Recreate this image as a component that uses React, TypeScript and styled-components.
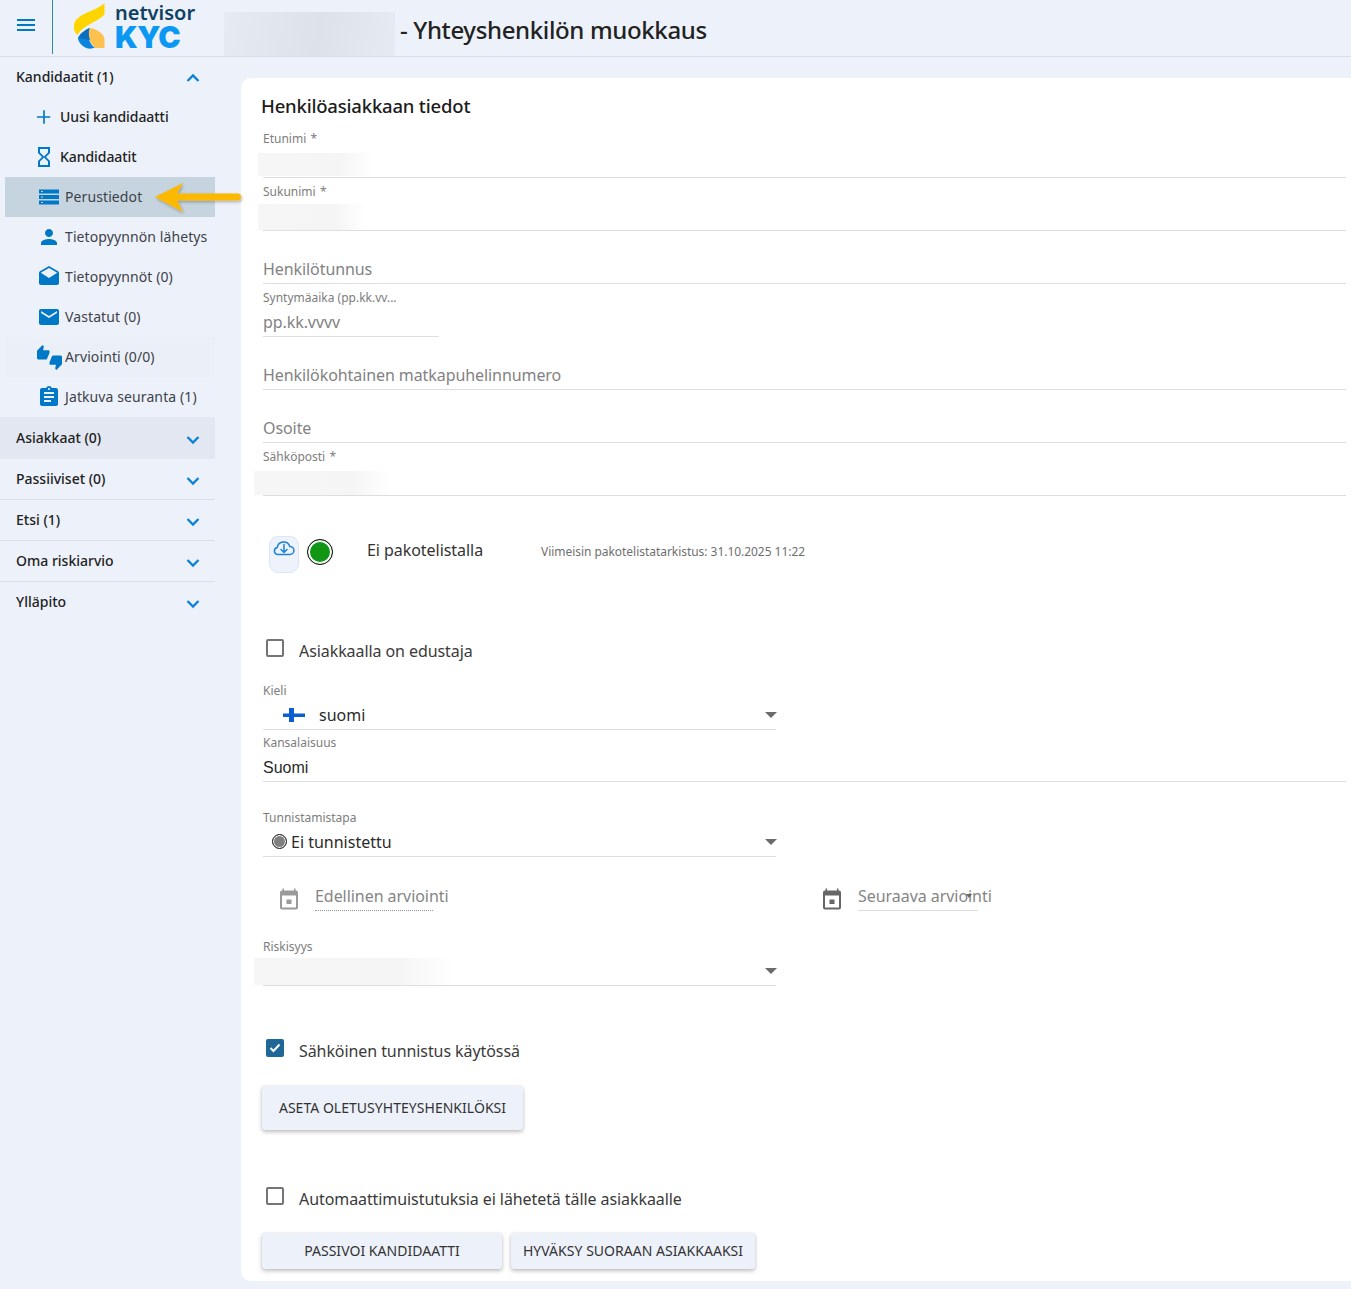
import React from "react";
import styled, { createGlobalStyle } from "styled-components";

const Global = createGlobalStyle`
  html, body { margin: 0; padding: 0; background: #edf1fa; }
  body { font-family: "Noto Sans", "Open Sans", sans-serif; color: #222; overflow: hidden; }
  * { box-sizing: border-box; }
`;

const Page = styled.div`
  width: 1351px;
  height: 1289px;
  display: flex;
  flex-direction: column;
  background: #edf1fa;
  overflow: hidden;
`;

const Header = styled.header`
  height: 57px;
  flex: none;
  display: flex;
  align-items: flex-start;
  border-bottom: 1px solid #d8dde7;
`;
const MenuButton = styled.div`
  width: 53px;
  height: 54px;
  flex: none;
  display: flex;
  align-items: center;
  justify-content: center;
  border-right: 1px solid #2e8ba6;
  padding-bottom: 5px;
  svg { display: block; }
`;
const LogoBox = styled.div`
  width: 171px;
  height: 56px;
  flex: none;
  display: flex;
  padding-left: 21px;
`;
const LogoMark = styled.svg`
  width: 32px;
  height: 56px;
  flex: none;
`;
const LogoText = styled.div`
  margin-left: 9px;
  display: flex;
  flex-direction: column;
`;
const LogoTop = styled.div`
  font-family: "Noto Sans", sans-serif;
  font-weight: 600;
  font-size: 20px;
  line-height: 22px;
  color: #0d4163;
  margin-top: 2px;
`;
const LogoBottom = styled.div`
  font-family: "Inter", sans-serif;
  font-weight: 900;
  font-size: 30px;
  line-height: 26px;
  color: #0a98f2;
  letter-spacing: -0.6px;
`;
const TitleBlur = styled.div`
  width: 171px;
  height: 44px;
  margin-top: 12px;
  flex: none;
  background: linear-gradient(100deg, #e6eaf3 0%, #dde1ea 55%, #e6eaf3 100%);
`;
const PageTitle = styled.h1`
  margin: 0 0 0 5px;
  font-size: 24px;
  font-weight: 500;
  line-height: 60px;
  color: #222;
  letter-spacing: -0.36px;
`;

const Body = styled.div`
  flex: 1;
  display: flex;
  align-items: flex-start;
  min-height: 0;
`;

const Sidebar = styled.nav`
  width: 215px;
  flex: none;
  display: flex;
  flex-direction: column;
`;
const Section = styled.div<{ $shade?: boolean; $line?: boolean; $height: number }>`
  height: ${p => p.$height}px;
  display: flex;
  align-items: center;
  justify-content: space-between;
  padding: 0 14px 0 16px;
  font-size: 14px;
  font-weight: 500;
  color: #222;
  background: ${p => (p.$shade ? "#e3e7f1" : "transparent")};
  border-bottom: ${p => (p.$line ? "1px solid #d9dee8" : "none")};
`;
const SectionLabel = styled.span`
  margin-bottom: 2px;
`;
const ChevronSvg = styled.svg<{ $up?: boolean }>`
  width: 16px;
  height: 10px;
  margin-top: ${p => (p.$up ? 2 : 4)}px;
  fill: none;
  stroke: #0a82d8;
  stroke-width: 2.3;
  flex: none;
`;
const NavItem = styled.div<{ $bg?: string; $strong?: boolean }>`
  height: 40px;
  margin-left: 5px;
  display: flex;
  align-items: center;
  position: relative;
  font-size: 14px;
  font-weight: ${p => (p.$strong ? 500 : 400)};
  color: ${p => (p.$strong ? "#222" : "#3d4249")};
  letter-spacing: ${p => (p.$strong ? "-0.06px" : "0.1px")};
  background: ${p => p.$bg ?? "transparent"};
`;
const NavIconSvg = styled.svg<{ $size: number; $left: number }>`
  width: ${p => p.$size}px;
  height: ${p => p.$size}px;
  margin-left: ${p => p.$left}px;
  fill: #0078c8;
  display: block;
  flex: none;
`;
const NavLabel = styled.span<{ $gap: number }>`
  margin: 0 0 2px ${p => p.$gap}px;
`;
const ArrowOverlay = styled.svg`
  position: absolute;
  left: 146px;
  top: 0;
  width: 94px;
  height: 40px;
  overflow: visible;
`;

const Card = styled.main`
  flex: 1;
  height: 1203px;
  margin: 21px 0 0 26px;
  background: #fff;
  border-radius: 10px 0 0 10px;
  padding: 0 5px 0 22px;
  display: flex;
  flex-direction: column;
  align-items: flex-start;
`;
const CardTitle = styled.h2`
  margin: 0 0 0 -2px;
  height: 47px;
  font-size: 18.5px;
  font-weight: 500;
  line-height: 55px;
  color: #1c1c1c;
  letter-spacing: -0.19px;
`;
const Field = styled.div<{ $width?: number; $height?: number; $top?: number }>`
  position: relative;
  width: ${p => (p.$width ? `${p.$width}px` : "100%")};
  height: ${p => p.$height ?? 53}px;
  margin-top: ${p => p.$top ?? 0}px;
  flex: none;
  border-bottom: 1px solid #dedede;
  display: flex;
  flex-direction: column;
  justify-content: flex-end;
`;
const FieldLabel = styled.label<{ $tight?: boolean }>`
  position: absolute;
  left: 0;
  top: ${p => (p.$tight ? 6 : 7)}px;
  font-size: 12px;
  line-height: 14px;
  color: #7d7d7d;
  white-space: nowrap;
`;
const Placeholder = styled.div`
  height: 29px;
  font-size: 16px;
  line-height: 31px;
  color: #828282;
  letter-spacing: -0.08px;
`;
const Value = styled.div`
  height: 29px;
  font-family: "Noto Sans", sans-serif;
  font-size: 16px;
  color: #2a2a2a;
  display: flex;
  align-items: center;
`;
const PlainValue = styled.div`
  height: 29px;
  padding-top: 2px;
  font-family: "Liberation Sans", Arial, sans-serif;
  font-size: 16px;
  line-height: 27px;
  color: #2a2a2a;
`;
const Blur = styled.div<{ $left: number; $top: number; $w: number; $h: number }>`
  position: absolute;
  left: ${p => p.$left}px;
  top: ${p => p.$top}px;
  width: ${p => p.$w}px;
  height: ${p => p.$h}px;
  background: linear-gradient(90deg, #f6f6f6 0%, #f5f5f5 72%, #ffffff 100%);
`;
const Caret = styled.span`
  position: absolute;
  right: -1px;
  bottom: 11px;
  width: 0;
  height: 0;
  border-left: 6px solid transparent;
  border-right: 6px solid transparent;
  border-top: 6px solid #6b6b6b;
`;
const FlagSvg = styled.svg`
  width: 22px;
  height: 14px;
  margin: 0 14px 0 20px;
  flex: none;
`;
const GreyDot = styled.span`
  width: 15px;
  height: 15px;
  margin: 0 4px 0 9px;
  border-radius: 50%;
  border: 1.5px solid #222;
  background: #808080;
  box-shadow: inset 0 0 0 1px #fff;
  flex: none;
`;

const StatusRow = styled.div`
  display: flex;
  align-items: flex-start;
  margin: 40px 0 0 6px;
  height: 37px;
`;
const CloudButton = styled.div`
  width: 30px;
  height: 37px;
  border-radius: 9px;
  background: #edf2fb;
  border: 1px solid #dce6f7;
  display: flex;
  justify-content: center;
  padding-top: 3px;
  flex: none;
`;
const StatusDot = styled.span`
  width: 26px;
  height: 26px;
  margin: 3px 0 0 8px;
  flex: none;
  border-radius: 50%;
  background: #129615;
  border: 1.5px solid #111;
  box-shadow: inset 0 0 0 2px #fff;
`;
const StatusText = styled.span`
  margin-left: 34px;
  width: 174px;
  flex: none;
  font-size: 16px;
  line-height: 28px;
  color: #333;
  letter-spacing: -0.05px;
`;
const StatusNote = styled.span`
  font-size: 12px;
  line-height: 31px;
  color: #6f6f6f;
  letter-spacing: -0.04px;
`;

const CheckRow = styled.div<{ $top: number }>`
  display: flex;
  align-items: center;
  height: 24px;
  margin: ${p => p.$top}px 0 0 3px;
  font-size: 16px;
  color: #3a3a3a;
  letter-spacing: -0.08px;
`;
const CheckBox = styled.span<{ $on?: boolean }>`
  width: 18px;
  height: 18px;
  margin: -7px 15px 0 0;
  flex: none;
  border-radius: 2px;
  border: ${p => (p.$on ? "none" : "2px solid #757575")};
  background: ${p => (p.$on ? "#1f6797" : "#fff")};
  display: flex;
  align-items: center;
  justify-content: center;
`;

const DateRow = styled.div`
  display: flex;
  margin: 25px 0 0 16px;
  height: 29px;
`;
const DateGroup = styled.div<{ $width: number }>`
  width: ${p => p.$width}px;
  display: flex;
  align-items: flex-start;
  flex: none;
`;
const DateIcon = styled.svg<{ $color: string }>`
  width: 24px;
  height: 24px;
  margin: 5px 14px 0 -2px;
  fill: ${p => p.$color};
  flex: none;
`;
const DateField = styled.div<{ $dotted?: boolean; $width: number }>`
  position: relative;
  width: ${p => p.$width}px;
  height: 29px;
  font-size: 16px;
  line-height: 29px;
  white-space: nowrap;
  color: #858585;
  letter-spacing: -0.05px;
  border-bottom: 1px ${p => (p.$dotted ? "dotted #9a9a9a" : "solid #dedede")};
`;
const SmallCaret = styled.span`
  position: absolute;
  left: 108px;
  top: 12px;
  width: 0;
  height: 0;
  border-left: 3.5px solid transparent;
  border-right: 3.5px solid transparent;
  border-top: 4px solid #666;
`;

const RaisedButton = styled.button<{ $w: number; $h: number }>`
  width: ${p => p.$w}px;
  height: ${p => p.$h}px;
  flex: none;
  padding: 0 0 2px;
  border: none;
  border-radius: 3px;
  background: #edf1fa;
  font-family: "Noto Sans", sans-serif;
  font-size: 14px;
  color: #333;
  letter-spacing: 0.03px;
  box-shadow: 0 2px 4px rgba(0, 0, 0, 0.25), 0 0 2px rgba(0, 0, 0, 0.08);
`;
const ButtonRow = styled.div<{ $top: number }>`
  display: flex;
  gap: 9px;
  margin: ${p => p.$top}px 0 0 -1px;
`;

const Chevron = ({ up }: { up?: boolean }) => (
  <ChevronSvg $up={up} viewBox="0 0 16 10">
    <path d={up ? "M2.500 8 8 2.500 13.500 8" : "M2.500 2 8 7.500 13.500 2"} />
  </ChevronSvg>
);

const icons: Record<string, string> = {
  add: "M19.5 13h-6.5v7h-2v-7H3.5v-2H11V4h2v7h6.5v2z",
  hour: "M6 2v6h.01L6 8.01 10 12l-4 4 .01.01H6V22h12v-5.99h-.01L18 16l-4-4 4-3.99-.01-.01H18V2H6zm10 14.5V20H8v-3.5l4-4 4 4zm-4-5l-4-4V4h8v3.5l-4 4z",
  list: "M2 4.5h20v4H2zM4 6v1h2V6zM2 10h20v4H2zM4 11.5v1h2v-1zM2 15.5h20v4H2zM4 17v1h2v-1z",
  person: "M12 12c2.21 0 4-1.79 4-4s-1.79-4-4-4-4 1.79-4 4 1.79 4 4 4zm0 2c-2.67 0-8 1.34-8 4v2h16v-2c0-2.66-5.33-4-8-4z",
  drafts: "M21.99 8c0-.72-.37-1.35-.94-1.7L12 1 2.95 6.3C2.38 6.65 2 7.28 2 8v10c0 1.1.9 2 2 2h16c1.1 0 2-.9 2-2l-.01-10zM12 13L3.74 7.84 12 3l8.26 4.84L12 13z",
  mail: "M20 4H4c-1.1 0-1.99.9-1.99 2L2 18c0 1.1.9 2 2 2h16c1.1 0 2-.9 2-2V6c0-1.1-.9-2-2-2zm0 4l-8 5-8-5V6l8 5 8-5v2z",
  thumbs: "M12 6c0-.55-.45-1-1-1H5.82l.66-3.18.02-.23c0-.31-.13-.59-.33-.8L5.38 0 .44 4.94C.17 5.21 0 5.59 0 6v6.5c0 .83.67 1.5 1.5 1.5h6.75c.62 0 1.15-.38 1.38-.91l2.26-5.29c.07-.17.11-.36.11-.55V6zm10.5 4h-6.75c-.62 0-1.15.38-1.38.91l-2.26 5.29c-.07.17-.11.36-.11.55V18c0 .55.45 1 1 1h5.18l-.66 3.18-.02.24c0 .31.13.59.33.8l.79.78 4.94-4.94c.27-.27.44-.65.44-1.06v-6.5c0-.83-.67-1.5-1.5-1.5z",
  clip: "M19 3h-4.18C14.4 1.84 13.3 1 12 1c-1.3 0-2.4.84-2.82 2H5c-1.1 0-2 .9-2 2v14c0 1.1.9 2 2 2h14c1.1 0 2-.9 2-2V5c0-1.1-.9-2-2-2zm-7 0c.55 0 1 .45 1 1s-.45 1-1 1-1-.45-1-1 .45-1 1-1zm2 14H7v-2h7v2zm3-4H7v-2h10v2zm0-4H7V7h10v2z",
};

const items: { label: string; icon: string; size: number; left: number; gap: number; strong?: boolean; bg?: string }[] = [
  { label: "Uusi kandidaatti", icon: "add", size: 20, left: 29, gap: 6, strong: true },
  { label: "Kandidaatit", icon: "hour", size: 24, left: 27, gap: 4, strong: true },
  { label: "Perustiedot", icon: "list", size: 24, left: 32, gap: 4, bg: "#c6d4df" },
  { label: "Tietopyynnön lähetys", icon: "person", size: 24, left: 32, gap: 4 },
  { label: "Tietopyynnöt (0)", icon: "drafts", size: 24, left: 32, gap: 4 },
  { label: "Vastatut (0)", icon: "mail", size: 24, left: 32, gap: 4 },
  { label: "Arviointi (0/0)", icon: "thumbs", size: 25, left: 32, gap: 3, bg: "#ebeff8" },
  { label: "Jatkuva seuranta (1)", icon: "clip", size: 24, left: 32, gap: 4 },
];

const sections: { label: string; height: number; shade?: boolean; line?: boolean }[] = [
  { label: "Asiakkaat (0)", height: 42, shade: true },
  { label: "Passiiviset (0)", height: 41, line: true },
  { label: "Etsi (1)", height: 41, line: true },
  { label: "Oma riskiarvio", height: 41, line: true },
  { label: "Ylläpito", height: 40 },
];

const CalendarGlyph = ({ color }: { color: string }) => (
  <DateIcon $color={color} viewBox="0 0 24 24">
    <path d="M17 1.500v2H7v-2H5.500v2H5c-1.100 0-2 .9-2 2v15c0 1.100.9 2 2 2h14c1.100 0 2-.9 2-2v-15c0-1.100-.9-2-2-2h-.5v-2H17zM19 20.500H5V8.500h14v12zM9.500 12.500h5v4.500h-5z" />
  </DateIcon>
);

export default function App() {
  return (
    <Page>
      <Global />
      <Header>
        <MenuButton>
          <svg width="18" height="12" viewBox="0 0 18 12" fill="#0078c8">
            <rect y="0" width="18" height="2" />
            <rect y="5" width="18" height="2" />
            <rect y="10" width="18" height="2" />
          </svg>
        </MenuButton>
        <LogoBox>
          <LogoMark viewBox="74 0 32 56">
            <path fill="#ffd500" d="M104.500 3C96 12 74 13 73.700 27c0 3 1.300 6 3.800 8C83 25 96 23 104.500 14.500z" />
            <path fill="#ffc14d" d="M89.500 28c7 1 14 5 15 11v9h-9c-6-4-8-13-6-20z" />
            <path fill="#0a84dc" d="M89.500 28C85 30 80.500 33 78 38c.5 4.500 4 8.500 10 10.500 3 .5 5-.5 7-.5-6-4-8-13-5.500-20z" />
            <path fill="#0c6fbd" d="M89.500 28c-1 4-1 8 .5 12l-12-2c2.500-5 7-8 11.500-10z" />
          </LogoMark>
          <LogoText>
            <LogoTop>netvisor</LogoTop>
            <LogoBottom>KYC</LogoBottom>
          </LogoText>
        </LogoBox>
        <TitleBlur />
        <PageTitle>- Yhteyshenkilön muokkaus</PageTitle>
      </Header>
      <Body>
        <Sidebar>
          <Section $height={40}>
            <SectionLabel>Kandidaatit (1)</SectionLabel>
            <Chevron up />
          </Section>
          {items.map(it => (
            <NavItem key={it.label} $bg={it.bg} $strong={it.strong}>
              <NavIconSvg $size={it.size} $left={it.left} viewBox="0 0 24 24" fillRule="evenodd">
                <path d={icons[it.icon]} />
              </NavIconSvg>
              <NavLabel $gap={it.gap}>{it.label}</NavLabel>
              {it.icon === "list" && (
                <ArrowOverlay viewBox="0 0 94 40">
                  <defs>
                    <filter id="arrowShadow" x="-20%" y="-30%" width="140%" height="160%">
                      <feDropShadow dx="1" dy="1.500" stdDeviation="1.500" floodColor="#000" floodOpacity="0.3" />
                    </filter>
                  </defs>
                  <path
                    filter="url(#arrowShadow)"
                    fill="#fdb900"
                    d="M4 20 32 6 26 16.500H87c1.800 0 3 1.500 3 3.500s-1.200 3.500-3 3.500H26L32 35z"
                  />
                </ArrowOverlay>
              )}
            </NavItem>
          ))}
          {sections.map(s => (
            <Section key={s.label} $shade={s.shade} $line={s.line} $height={s.height}>
              <SectionLabel>{s.label}</SectionLabel>
              <Chevron />
            </Section>
          ))}
        </Sidebar>
        <Card>
          <CardTitle>Henkilöasiakkaan tiedot</CardTitle>
          <Field>
            <FieldLabel>Etunimi&#8202; *</FieldLabel>
            <Blur $left={-5} $top={28} $w={115} $h={23} />
          </Field>
          <Field>
            <FieldLabel>Sukunimi&#8202; *</FieldLabel>
            <Blur $left={-5} $top={26} $w={107} $h={26} />
          </Field>
          <Field>
            <Placeholder>Henkilötunnus</Placeholder>
          </Field>
          <Field $width={176}>
            <FieldLabel>Syntymäaika (pp.kk.vv...</FieldLabel>
            <Placeholder>pp.kk.vvvv</Placeholder>
          </Field>
          <Field>
            <Placeholder>Henkilökohtainen matkapuhelinnumero</Placeholder>
          </Field>
          <Field>
            <Placeholder>Osoite</Placeholder>
          </Field>
          <Field>
            <FieldLabel>Sähköposti&#8202; *</FieldLabel>
            <Blur $left={-9} $top={28} $w={137} $h={24} />
          </Field>
          <StatusRow>
            <CloudButton>
              <svg width="22" height="18" viewBox="0 0 22 18" fill="none" stroke="#1d83d6" strokeWidth="1.500" strokeLinejoin="round" strokeLinecap="round">
                <path d="M6 14.500H4.500A3.500 3.500 0 0 1 4.200 7.600 6.500 6.500 0 0 1 16.800 6.500 4 4 0 0 1 17 14.500z" />
                <path d="M11 4.500v7.500M8 9.500l3 3 3-3" />
              </svg>
            </CloudButton>
            <StatusDot />
            <StatusText>Ei pakotelistalla</StatusText>
            <StatusNote>Viimeisin pakotelistatarkistus: 31.10.2025 11:22</StatusNote>
          </StatusRow>
          <CheckRow $top={66}>
            <CheckBox />
            Asiakkaalla on edustaja
          </CheckRow>
          <Field $width={513} $top={14}>
            <FieldLabel>Kieli</FieldLabel>
            <Value>
              <FlagSvg viewBox="0 0 22 14">
                <rect x="0" y="5.500" width="22" height="3.500" fill="#0a5fd0" />
                <rect x="6" y="0" width="5" height="14" fill="#0a5fd0" />
              </FlagSvg>
              suomi
            </Value>
            <Caret />
          </Field>
          <Field $height={52}>
            <FieldLabel $tight>Kansalaisuus</FieldLabel>
            <PlainValue>Suomi</PlainValue>
          </Field>
          <Field $width={513} $top={22}>
            <FieldLabel>Tunnistamistapa</FieldLabel>
            <Value>
              <GreyDot />
              Ei tunnistettu
            </Value>
            <Caret />
          </Field>
          <DateRow>
            <DateGroup $width={543}>
              <CalendarGlyph color="#9a9a9a" />
              <DateField $dotted $width={118}>Edellinen arviointi</DateField>
            </DateGroup>
            <DateGroup $width={200}>
              <CalendarGlyph color="#666" />
              <DateField $width={120}>
                Seuraava arviointi
                <SmallCaret />
              </DateField>
            </DateGroup>
          </DateRow>
          <Field $width={513} $top={22}>
            <FieldLabel>Riskisyys</FieldLabel>
            <Blur $left={-9} $top={25} $w={201} $h={27} />
            <Caret />
          </Field>
          <CheckRow $top={53}>
            <CheckBox $on>
              <svg width="12" height="10" viewBox="0 0 12 10" fill="none" stroke="#fff" strokeWidth="2">
                <path d="M1.500 5 4.500 8 10.500 1.500" />
              </svg>
            </CheckBox>
            Sähköinen tunnistus käytössä
          </CheckRow>
          <ButtonRow $top={23}>
            <RaisedButton $w={261} $h={44}>ASETA OLETUSYHTEYSHENKILÖKSI</RaisedButton>
          </ButtonRow>
          <CheckRow $top={57}>
            <CheckBox />
            Automaattimuistutuksia ei lähetetä tälle asiakkaalle
          </CheckRow>
          <ButtonRow $top={22}>
            <RaisedButton $w={240} $h={36}>PASSIVOI KANDIDAATTI</RaisedButton>
            <RaisedButton $w={244} $h={36}>HYVÄKSY SUORAAN ASIAKKAAKSI</RaisedButton>
          </ButtonRow>
        </Card>
      </Body>
    </Page>
  );
}
